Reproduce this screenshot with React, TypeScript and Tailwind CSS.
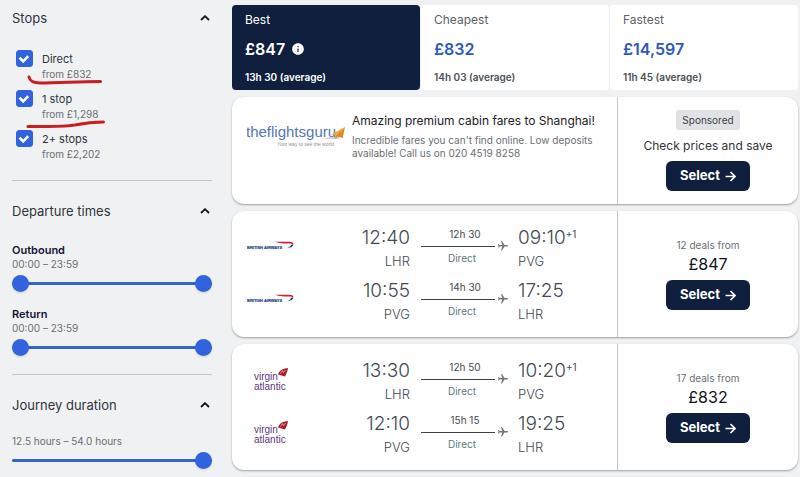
import { useId, useState } from 'react';
import type { ReactNode } from 'react';
import { MdFlight, MdInfo } from 'react-icons/md';

type Leg = {
  depart: string;
  from: string;
  duration: string;
  arrive: string;
  to: string;
  nextDay?: boolean;
};

type Deal = {
  airline: 'ba' | 'virgin';
  deals: number;
  price: string;
  legs: Leg[];
};

const STOPS = [
  { label: 'Direct', price: 'from £832' },
  { label: '1 stop', price: 'from £1,298' },
  { label: '2+ stops', price: 'from £2,202' },
];

const TABS = [
  { name: 'Best', price: '£847', average: '13h 30 (average)' },
  { name: 'Cheapest', price: '£832', average: '14h 03 (average)' },
  { name: 'Fastest', price: '£14,597', average: '11h 45 (average)' },
];

const DEALS: Deal[] = [
  {
    airline: 'ba',
    deals: 12,
    price: '£847',
    legs: [
      { depart: '12:40', from: 'LHR', duration: '12h 30', arrive: '09:10', to: 'PVG', nextDay: true },
      { depart: '10:55', from: 'PVG', duration: '14h 30', arrive: '17:25', to: 'LHR' },
    ],
  },
  {
    airline: 'virgin',
    deals: 17,
    price: '£832',
    legs: [
      { depart: '13:30', from: 'LHR', duration: '12h 50', arrive: '10:20', to: 'PVG', nextDay: true },
      { depart: '12:10', from: 'PVG', duration: '15h 15', arrive: '19:25', to: 'LHR' },
    ],
  },
];

function BritishAirwaysLogo() {
  return (
    <svg viewBox="0 0 47 10" className="w-[47px] h-[10px]" role="img" aria-label="British Airways">
      <text x="0" y="8" fontSize="4" fontWeight="700" fill="#2a4a8f" stroke="#2a4a8f" strokeWidth=".2" fontFamily="Liberation Sans, sans-serif">BRITISH AIRWAYS</text>
      <path d="M28 .8h14c3.500 0 4.800 1.200 4.200 3.200-.8-1.200-2.200-1.400-4.500-1.400-5 0-9.200-.3-13.700-1.800z" fill="#d0202e" />
      <path d="M46.400 3.600c-.4 2.200-2.400 3.400-6.200 3.200 2-.5 3.400-1.200 3.900-3z" fill="#1f3a86" />
    </svg>
  );
}

function VirginLogo() {
  return (
    <svg viewBox="0 0 36 26" className="w-9 h-[26px]" role="img" aria-label="Virgin Atlantic">
      <g fill="#5c3580" fontSize="10" fontFamily="Liberation Sans, sans-serif">
        <text x="1" y="14">virgin</text>
        <text x="1" y="24">atlantic</text>
      </g>
      <path d="M25 8.500C26 5 28.500 3 32 2.500l3-.5c-.4 3-1.400 5.500-3 8.500z" fill="#a91c2b" />
      <path d="M27.500 7.500l2-3 1 2 2-2.400" fill="none" stroke="#f2c9cd" strokeWidth=".7" />
    </svg>
  );
}

function FlightsGuruLogo() {
  return (
    <svg viewBox="0 0 101 30" className="h-[30px] w-[101px]" role="img" aria-label="theflightsguru">
      <path d="M74 16.500l18-2.500v3z" fill="#c9cdd8" />
      <text x="-1" y="15" fontSize="15" fill="#5377b5" fontFamily="Liberation Sans, sans-serif">theflightsguru</text>
      <text x="30" y="24" fontSize="5" fill="#8d9196" fontFamily="Liberation Sans, sans-serif">Your way to see the world</text>
      <path d="M98 5L84.500 12.200l4 1.300z" fill="#f0a63a" />
      <path d="M98 5L88.500 13.500l-.3 3.500 2.500-2.500 5 1.500z" fill="#e08a1e" />
    </svg>
  );
}

function Section({ title, children }: { title: string; children: ReactNode }) {
  return (
    <section>
      <h2>
        <button type="button" aria-expanded="true" className="flex w-full items-center justify-between text-[13px] leading-5 text-[#30343b]">
          {title}
          <svg viewBox="0 0 10 6" className="mr-0.5 h-1.5 w-2.5" aria-hidden="true">
            <path d="M1 5l4-3.800L9 5" fill="none" stroke="#111" strokeWidth="1.800" />
          </svg>
        </button>
      </h2>
      {children}
    </section>
  );
}

const THUMB =
  'absolute inset-0 h-[17px] w-full appearance-none bg-transparent pointer-events-none [&::-webkit-slider-thumb]:pointer-events-auto [&::-webkit-slider-thumb]:appearance-none [&::-webkit-slider-thumb]:size-[17px] [&::-webkit-slider-thumb]:rounded-full [&::-webkit-slider-thumb]:bg-[#3263de] [&::-webkit-slider-thumb]:shadow-sm';

function Slider({ label, single = false }: { label: string; single?: boolean }) {
  return (
    <div className="relative flex h-[17px] items-center">
      <div className="h-[3px] w-full rounded-full bg-[#3563cf]" />
      {!single && <input type="range" min={0} max={1439} defaultValue={0} aria-label={`${label} from`} className={THUMB} />}
      <input type="range" min={0} max={1439} defaultValue={1439} aria-label={`${label} to`} className={THUMB} />
    </div>
  );
}

function StopOption({ label, price }: { label: string; price: string }) {
  const id = useId();
  return (
    <div className="flex h-10 gap-[9px]">
      <input
        id={id}
        type="checkbox"
        defaultChecked
        className="peer size-[17px] shrink-0 appearance-none rounded-[3px] border border-[#3263de] bg-white checked:bg-[#3263de]"
      />
      <svg viewBox="0 0 17 17" className="pointer-events-none -ml-[26px] hidden size-[17px] shrink-0 peer-checked:block" aria-hidden="true">
        <path d="M3.500 7.800l3.700 3.500 5-5.200" fill="none" stroke="#fff" strokeWidth="2.600" />
      </svg>
      <label htmlFor={id} className="pt-0.5 text-[11px] leading-[15px] text-[#30343b]">
        {label}
        <span className="block text-[10px] text-[#6a6f75]">{price}</span>
      </label>
    </div>
  );
}

function Filters() {
  return (
    <aside className="pt-[3px]">
      <Section title="Stops">
        <div className="relative mt-[22px] pl-1">
          {STOPS.map((s) => <StopOption key={s.label} {...s} />)}
          <svg viewBox="0 0 80 54" className="pointer-events-none absolute left-[14px] top-[24px] h-[54px] w-20" fill="none" stroke="#c81e22" strokeWidth="3" strokeLinecap="round" aria-hidden="true">
            <path d="M3 3c1 4.500 4 6 11 6 20 0 38-1.500 60.500-1.500" />
            <path d="M2 52.500c16 0 35 .5 47-1.500 10-2 17-3 28.500-3" />
          </svg>
        </div>
      </Section>
      <hr className="mt-[10px] border-[#c3c6ca]" />
      <div className="mt-5">
        <Section title="Departure times">
          <div className="mt-[21px] flex flex-col gap-[14px]">
            {['Outbound', 'Return'].map((name) => (
              <div key={name}>
                <h3 className="text-[11px] font-semibold leading-4 text-[#161633]">{name}</h3>
                <p className="mb-1 text-[10px] leading-[13px] text-[#6a6f75]">00:00 – 23:59</p>
                <Slider label={name} />
              </div>
            ))}
          </div>
        </Section>
      </div>
      <hr className="mt-[18px] border-[#c3c6ca]" />
      <div className="mt-5">
        <Section title="Journey duration">
          <p className="mb-1 mt-5 text-[10px] leading-[13px] text-[#6a6f75]">12.5 hours – 54.0 hours</p>
          <Slider label="Journey duration" single />
        </Section>
      </div>
    </aside>
  );
}

function SelectButton() {
  return (
    <button type="button" className="flex h-[30px] items-center gap-[5px] rounded-md bg-[#0f1f3d] px-[14px] text-[13px] font-bold text-white">
      Select
      <svg viewBox="0 0 11 11" className="size-[11px]" aria-hidden="true">
        <path d="M.5 5.500h9M5.500 1l4.500 4.500L5.500 10" fill="none" stroke="currentColor" strokeWidth="1.600" />
      </svg>
    </button>
  );
}

function Card({ aside, children }: { aside: ReactNode; children: ReactNode }) {
  return (
    <article className="flex rounded-xl bg-white shadow-[0_1px_2px_rgba(37,32,31,0.4)]">
      <div className="min-w-0 flex-1 pl-[15px]">{children}</div>
      <div className="flex w-[181px] shrink-0 flex-col items-center justify-center border-l border-[#c3c6ca]">{aside}</div>
    </article>
  );
}

function LegRow({ leg, airline }: { leg: Leg; airline: Deal['airline'] }) {
  return (
    <div className="flex text-[#444a52]">
      <div className="flex w-[47px] items-center justify-center pb-2">
        {airline === 'ba' ? <BritishAirwaysLogo /> : <VirginLogo />}
      </div>
      <div className="flex-1 text-right">
        <p className="text-[19px] font-light leading-[22px]">{leg.depart}</p>
        <p className="text-[13px] font-light leading-6">{leg.from}</p>
      </div>
      <div className="ml-[11px] w-[88px] text-center text-[10px] leading-[14px]">
        <p>{leg.duration}</p>
        <div className="flex h-[10px] items-center gap-0.5">
          <div className="h-px flex-1 bg-[#3c4047]" />
          <MdFlight className="size-[12px] rotate-90 text-[#72777f]" aria-hidden="true" />
        </div>
        <p className="pr-1.5 text-[#5b7a80]">Direct</p>
      </div>
      <div className="w-[108px] pl-[9px]">
        <p className="flex text-[19px] font-light leading-[22px]">
          {leg.arrive}
          {leg.nextDay && <sup className="top-0 text-[10px] font-normal leading-[14px]">+1</sup>}
        </p>
        <p className="text-[13px] font-light leading-6">{leg.to}</p>
      </div>
    </div>
  );
}

function PriceTabs() {
  const [active, setActive] = useState('Best');
  return (
    <div role="tablist" className="grid grid-cols-3 gap-px">
      {TABS.map((t) => {
        const on = t.name === active;
        return (
          <button
            key={t.name}
            type="button"
            role="tab"
            aria-selected={on}
            onClick={() => setActive(t.name)}
            className={`rounded-[4px] px-[13px] pb-[5px] pt-[7px] text-left ${on ? 'bg-[#0f1f3d] text-white' : 'bg-white text-[#5c6168]'}`}
          >
            <span className="block text-[12px] leading-4">{t.name}</span>
            <span className={`mb-[10px] mt-[11px] flex items-center gap-1.5 text-[16px] font-semibold leading-5 ${on ? '' : 'text-[#2f59bd]'}`}>
              {t.price}
              {on && <MdInfo className="size-[14px]" aria-hidden="true" />}
            </span>
            <span className={`block text-[10px] font-semibold leading-4 ${on ? '' : 'text-[#4a4f56]'}`}>{t.average}</span>
          </button>
        );
      })}
    </div>
  );
}

export default function App() {
  return (
    <div className="grid h-screen grid-cols-[200px_1fr] items-start gap-5 overflow-hidden bg-[#eff1f3] pl-3 pr-0.5 pt-[5px] font-['Inter','Liberation_Sans',sans-serif]">
      <Filters />
      <main className="flex flex-col gap-[7px]">
        <PriceTabs />
        <Card
          aside={
            <>
              <span className="rounded-[3px] bg-[#e0e2e5] px-1.5 text-[10px] leading-5 text-[#3c4047]">Sponsored</span>
              <p className="my-1.5 text-[12px] leading-[19px] text-[#30343b]">Check prices and save</p>
              <SelectButton />
            </>
          }
        >
          <div className="flex h-[107px] gap-1 pt-[13px]">
            <div className="w-[101px] shrink-0 pt-3">
              <FlightsGuruLogo />
            </div>
            <div>
              <h2 className="text-[12px] leading-[22px] text-[#1d2026]">Amazing premium cabin fares to Shanghai!</h2>
              <p className="mt-0.5 max-w-[250px] text-[10px] leading-[13px] text-[#6a6f75]">
                Incredible fares you can't find online. Low deposits available! Call us on 020 4519 8258
              </p>
            </div>
          </div>
        </Card>
        {DEALS.map((d) => (
          <Card
            key={d.airline}
            aside={
              <>
                <p className="text-[10px] leading-[15px] text-[#6a6f75]">{d.deals} deals from</p>
                <p className="mb-[5px] text-[16px] leading-[22px] text-[#111419]">{d.price}</p>
                <SelectButton />
              </>
            }
          >
            <div className="flex flex-col gap-[7px] pb-[11px] pt-4">
              {d.legs.map((leg) => <LegRow key={leg.from} leg={leg} airline={d.airline} />)}
            </div>
          </Card>
        ))}
        <Card aside={null}>
          <div className="h-32" />
        </Card>
      </main>
    </div>
  );
}
